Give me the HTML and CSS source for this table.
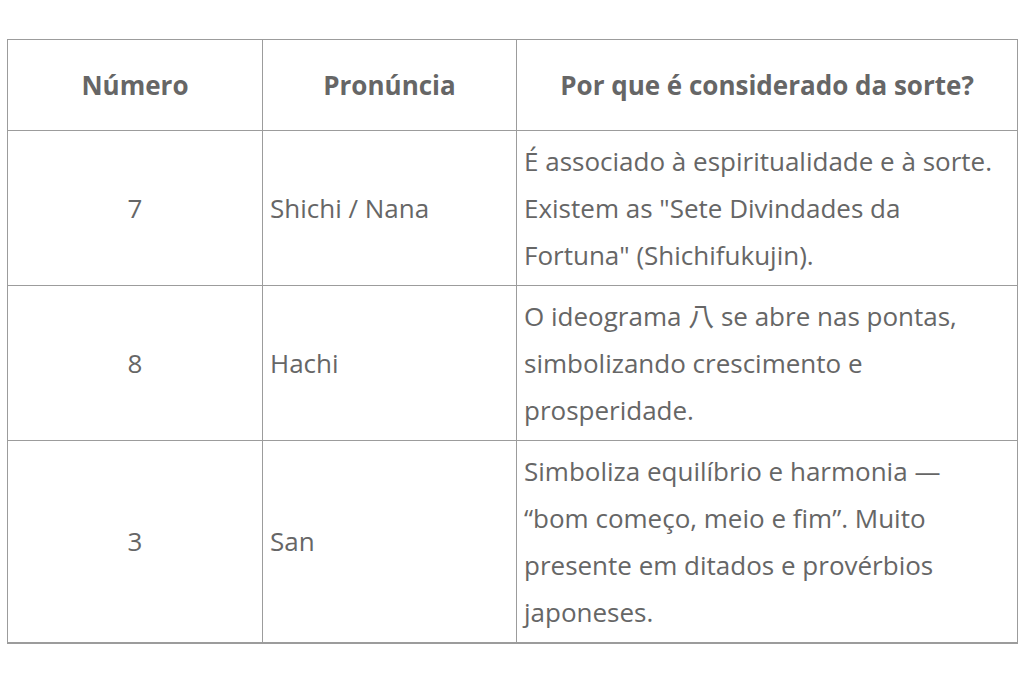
FILE: index.html
```html
<!DOCTYPE html>
<html lang="pt">
<head>
<meta charset="utf-8">
<link rel="stylesheet" href="styles.css">
</head>
<body>
<div class="wrap">
<table class="luck">
  <colgroup>
    <col class="c1"><col class="c2"><col class="c3">
  </colgroup>
  <thead>
    <tr><th>Número</th><th>Pronúncia</th><th>Por que é considerado da sorte?</th></tr>
  </thead>
  <tbody>
    <tr>
      <td class="num">7</td>
      <td>Shichi / Nana</td>
      <td>É associado à espiritualidade e à sorte. Existem as "Sete Divindades da Fortuna" (Shichifukujin).</td>
    </tr>
    <tr>
      <td class="num">8</td>
      <td>Hachi</td>
      <td>O ideograma 八 se abre nas pontas, simbolizando crescimento e prosperidade.</td>
    </tr>
    <tr>
      <td class="num">3</td>
      <td>San</td>
      <td>Simboliza equilíbrio e harmonia — “bom começo, meio e fim”. Muito presente em ditados e provérbios japoneses.</td>
    </tr>
  </tbody>
</table>
</div>
</body>
</html>
```

FILE: styles.css
```css
html, body {
  margin: 0;
  padding: 0;
  background: #fff;
}
body {
  font-family: "Open Sans", "Noto Sans CJK JP", sans-serif;
  color: #666;
}
.wrap {
  padding: 39px 7px 0 7px;
}
.luck {
  width: 1010px;
  border-collapse: collapse;
  table-layout: fixed;
  font-size: 26px;
  line-height: 47px;
}
.c1 { width: 255px; }
.c2 { width: 254px; }
.c3 { width: 501px; }
.luck th, .luck td {
  border: 1px solid #9c9c9c;
  padding: 6.5px 7px;
  vertical-align: middle;
  text-align: left;
}
.luck th {
  font-weight: 700;
  text-align: center;
  padding: 21.5px 7px;
  color: #666;
}
.luck td.num {
  text-align: center;
}
.luck tbody tr:last-child td {
  border-bottom-width: 2px;
}
```
